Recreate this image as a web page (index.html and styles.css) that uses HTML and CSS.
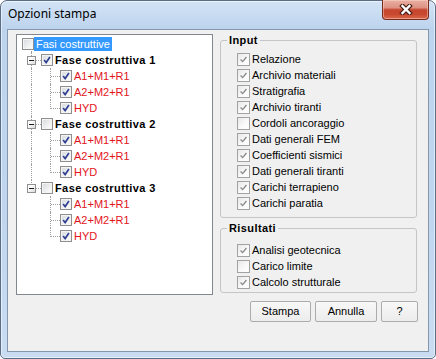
FILE: index.html
```html
<!DOCTYPE html>
<html>
<head>
<meta charset="utf-8">
<link rel="stylesheet" href="styles.css">
</head>
<body>
<div class="window">
  <div class="titlebar">
    <span class="title">Opzioni stampa</span>
    <div class="close">
      <svg width="14" height="11" viewBox="0 0 14 11">
        <path d="M3.5 2 L10.5 9 M10.5 2 L3.5 9" stroke="#4a1d14" stroke-width="4.6" stroke-linecap="square" fill="none"/>
        <path d="M3.5 2 L10.5 9 M10.5 2 L3.5 9" stroke="#ffffff" stroke-width="2.4" stroke-linecap="square" fill="none"/>
      </svg>
    </div>
  </div>
  <div class="client">
    <div class="tree">
      <div class="row root">
        <span class="tcb"></span><span class="label sel">Fasi costruttive</span>
      </div>

      <div class="row">
        <span class="cell tee"><span class="exp"></span></span>
        <span class="tcb"><svg viewBox="0 0 12 12"><path d="M2.5 6 L5 9 L9.5 2.5"/></svg></span><span class="label bold">Fase costruttiva 1</span>
      </div>
      <div class="row">
        <span class="cell pipe"></span><span class="cell tee"></span>
        <span class="tcb"><svg viewBox="0 0 12 12"><path d="M2.5 6 L5 9 L9.5 2.5"/></svg></span><span class="label red">A1+M1+R1</span>
      </div>
      <div class="row">
        <span class="cell pipe"></span><span class="cell tee"></span>
        <span class="tcb"><svg viewBox="0 0 12 12"><path d="M2.5 6 L5 9 L9.5 2.5"/></svg></span><span class="label red">A2+M2+R1</span>
      </div>
      <div class="row">
        <span class="cell pipe"></span><span class="cell ell"></span>
        <span class="tcb"><svg viewBox="0 0 12 12"><path d="M2.5 6 L5 9 L9.5 2.5"/></svg></span><span class="label red">HYD</span>
      </div>

      <div class="row">
        <span class="cell tee"><span class="exp"></span></span>
        <span class="tcb"></span><span class="label bold">Fase costruttiva 2</span>
      </div>
      <div class="row">
        <span class="cell pipe"></span><span class="cell tee"></span>
        <span class="tcb"><svg viewBox="0 0 12 12"><path d="M2.5 6 L5 9 L9.5 2.5"/></svg></span><span class="label red">A1+M1+R1</span>
      </div>
      <div class="row">
        <span class="cell pipe"></span><span class="cell tee"></span>
        <span class="tcb"><svg viewBox="0 0 12 12"><path d="M2.5 6 L5 9 L9.5 2.5"/></svg></span><span class="label red">A2+M2+R1</span>
      </div>
      <div class="row">
        <span class="cell pipe"></span><span class="cell ell"></span>
        <span class="tcb"><svg viewBox="0 0 12 12"><path d="M2.5 6 L5 9 L9.5 2.5"/></svg></span><span class="label red">HYD</span>
      </div>

      <div class="row">
        <span class="cell ell"><span class="exp"></span></span>
        <span class="tcb"></span><span class="label bold">Fase costruttiva 3</span>
      </div>
      <div class="row">
        <span class="cell"></span><span class="cell tee"></span>
        <span class="tcb"><svg viewBox="0 0 12 12"><path d="M2.5 6 L5 9 L9.5 2.5"/></svg></span><span class="label red">A1+M1+R1</span>
      </div>
      <div class="row">
        <span class="cell"></span><span class="cell tee"></span>
        <span class="tcb"><svg viewBox="0 0 12 12"><path d="M2.5 6 L5 9 L9.5 2.5"/></svg></span><span class="label red">A2+M2+R1</span>
      </div>
      <div class="row">
        <span class="cell"></span><span class="cell ell"></span>
        <span class="tcb"><svg viewBox="0 0 12 12"><path d="M2.5 6 L5 9 L9.5 2.5"/></svg></span><span class="label red">HYD</span>
      </div>
    </div>

    <div class="side">
      <fieldset class="group input">
        <legend>Input</legend>
        <div class="opt"><span class="cb"><svg viewBox="0 0 13 13"><path d="M3 6.5 L5.5 9 L10 3.5"/></svg></span>Relazione</div>
        <div class="opt"><span class="cb"><svg viewBox="0 0 13 13"><path d="M3 6.5 L5.5 9 L10 3.5"/></svg></span>Archivio materiali</div>
        <div class="opt"><span class="cb"><svg viewBox="0 0 13 13"><path d="M3 6.5 L5.5 9 L10 3.5"/></svg></span>Stratigrafia</div>
        <div class="opt"><span class="cb"><svg viewBox="0 0 13 13"><path d="M3 6.5 L5.5 9 L10 3.5"/></svg></span>Archivio tiranti</div>
        <div class="opt"><span class="cb"></span>Cordoli ancoraggio</div>
        <div class="opt"><span class="cb"><svg viewBox="0 0 13 13"><path d="M3 6.5 L5.5 9 L10 3.5"/></svg></span>Dati generali FEM</div>
        <div class="opt"><span class="cb"><svg viewBox="0 0 13 13"><path d="M3 6.5 L5.5 9 L10 3.5"/></svg></span>Coefficienti sismici</div>
        <div class="opt"><span class="cb"><svg viewBox="0 0 13 13"><path d="M3 6.5 L5.5 9 L10 3.5"/></svg></span>Dati generali tiranti</div>
        <div class="opt"><span class="cb"><svg viewBox="0 0 13 13"><path d="M3 6.5 L5.5 9 L10 3.5"/></svg></span>Carichi terrapieno</div>
        <div class="opt"><span class="cb"><svg viewBox="0 0 13 13"><path d="M3 6.5 L5.5 9 L10 3.5"/></svg></span>Carichi paratia</div>
      </fieldset>
      <fieldset class="group results">
        <legend>Risultati</legend>
        <div class="opt"><span class="cb"><svg viewBox="0 0 13 13"><path d="M3 6.5 L5.5 9 L10 3.5"/></svg></span>Analisi geotecnica</div>
        <div class="opt"><span class="cb"></span>Carico limite</div>
        <div class="opt"><span class="cb"><svg viewBox="0 0 13 13"><path d="M3 6.5 L5.5 9 L10 3.5"/></svg></span>Calcolo strutturale</div>
      </fieldset>
      <div class="buttons">
        <button class="btn b-stampa">Stampa</button>
        <button class="btn b-annulla">Annulla</button>
        <button class="btn b-help">?</button>
      </div>
    </div>
  </div>
</div>
</body>
</html>
```
FILE: styles.css
```css
* { box-sizing: border-box; }
html, body { margin: 0; padding: 0; }
body {
  width: 436px;
  height: 359px;
  overflow: hidden;
  background: #ffffff;
  font-family: "Liberation Sans", Arial, sans-serif;
  font-size: 11px;
  color: #000;
}

.window {
  width: 436px;
  height: 359px;
  border: 1px solid #5a6d86;
  border-radius: 7px 7px 5px 5px;
  background: linear-gradient(to bottom, #d3e3f5 0px, #bdd4ee 28px, #c0d6ef 60%, #c9dcf2 100%);
  box-shadow: inset 0 0 0 1px rgba(255, 255, 255, 0.55);
  display: flex;
  flex-direction: column;
}

.titlebar {
  height: 28px;
  display: flex;
  align-items: flex-start;
  padding-left: 7px;
  flex: none;
}
.title {
  font-family: "Noto Sans", "Liberation Sans", sans-serif;
  font-size: 12px;
  line-height: 16px;
  padding-top: 5px;
  color: #000;
}
.close {
  margin-left: auto;
  margin-right: 6px;
  margin-top: -1px;
  width: 47px;
  height: 20px;
  border: 1px solid #7a2a1c;
  border-top: none;
  border-radius: 0 0 4px 4px;
  background: linear-gradient(to bottom, #eab0a4 0%, #dd9283 40%, #c6452e 52%, #c9482f 75%, #d96a4f 100%);
  box-shadow: inset 0 0 0 1px rgba(255, 220, 210, 0.45);
  display: flex;
  align-items: center;
  justify-content: center;
}
.close svg { display: block; margin-top: -1px; }

.client {
  margin: 0 6px;
  height: 323px;
  border: 1px solid #8797ab;
  background: #f0f0f0;
  display: flex;
  align-items: flex-start;
  flex: none;
}

/* tree */
.tree {
  width: 197px;
  height: 261px;
  margin: 4px 0 0 8px;
  border: 1px solid #828790;
  background: #ffffff;
  padding: 1px 0 0 5px;
  flex: none;
}
.row {
  display: flex;
  align-items: center;
  height: 16px;
  position: relative;
}
.root::after {
  content: "";
  position: absolute;
  left: 9px;
  top: 13px;
  height: 3px;
  border-left: 1px dotted #a0a0a0;
}
.cell {
  width: 19px;
  height: 16px;
  flex: none;
  position: relative;
}
.cell.tee::before,
.cell.pipe::before,
.cell.ell::before {
  content: "";
  position: absolute;
  left: 9px;
  top: 0;
  height: 16px;
  border-left: 1px dotted #a0a0a0;
}
.cell.ell::before { height: 9px; }
.cell.tee::after,
.cell.ell::after {
  content: "";
  position: absolute;
  left: 10px;
  top: 8px;
  width: 9px;
  border-top: 1px dotted #a0a0a0;
}
.exp {
  position: absolute;
  left: 5px;
  top: 4px;
  width: 9px;
  height: 9px;
  border: 1px solid #919191;
  background: linear-gradient(135deg, #ffffff 30%, #d8d8d8 100%);
  z-index: 1;
}
.exp::after {
  content: "";
  position: absolute;
  left: 1px;
  top: 3px;
  width: 5px;
  height: 1px;
  background: #1c1c1c;
}
.tcb {
  width: 12px;
  height: 12px;
  flex: none;
  border: 1px solid #8f8f8f;
  background: linear-gradient(135deg, #d6d9de 0%, #f4f4f4 70%, #ffffff 100%);
  box-shadow: inset 0 0 0 1px #f4f4f4;
  display: flex;
}
.tcb svg {
  width: 10px;
  height: 10px;
  fill: none;
  stroke: #2b3f92;
  stroke-width: 2;
}
.label {
  padding: 0 2px;
  line-height: 14px;
  height: 14px;
  white-space: nowrap;
}
.label.sel {
  background: #3399ff;
  color: #ffffff;
}
.label.bold {
  font-weight: bold;
  letter-spacing: 0.4px;
}
.label.red { color: #e3131b; }

/* right side */
.side {
  width: 198px;
  margin: 0 0 0 7px;
  flex: none;
  display: flex;
  flex-direction: column;
}
.group {
  margin: 0;
  width: 197px;
  border: 1px solid #c3c6c9;
  border-radius: 3px;
  padding: 4px 0 6px 6px;
  min-width: 0;
}
.group legend {
  padding: 0 2px;
  font-weight: bold;
  letter-spacing: 0.4px;
  line-height: 13px;
}
.input { margin-top: 4px; }
.results { margin-top: 4px; padding-top: 7px; padding-bottom: 2px; }
.opt {
  display: flex;
  align-items: center;
  height: 16px;
  line-height: 16px;
  margin-left: 10px;
  white-space: nowrap;
}
.cb {
  width: 13px;
  height: 13px;
  flex: none;
  margin-right: 2px;
  border: 1px solid #a2a2a2;
  background: linear-gradient(135deg, #e8e8e8 0%, #fafafa 60%, #ffffff 100%);
  display: flex;
}
.cb svg {
  width: 11px;
  height: 11px;
  fill: none;
  stroke: #8a8a8a;
  stroke-width: 1.6;
}

.buttons {
  margin-top: 8px;
  display: flex;
  justify-content: flex-end;
  gap: 4px;
}
.btn {
  height: 21px;
  padding: 0;
  border: 1px solid #acacac;
  border-radius: 2px;
  background: linear-gradient(to bottom, #f8f8f8, #ececec);
  font-family: "Liberation Sans", Arial, sans-serif;
  font-size: 11px;
  line-height: 19px;
  color: #000;
}
.b-stampa { width: 61px; }
.b-annulla { width: 62px; }
.b-help { width: 37px; }
```
